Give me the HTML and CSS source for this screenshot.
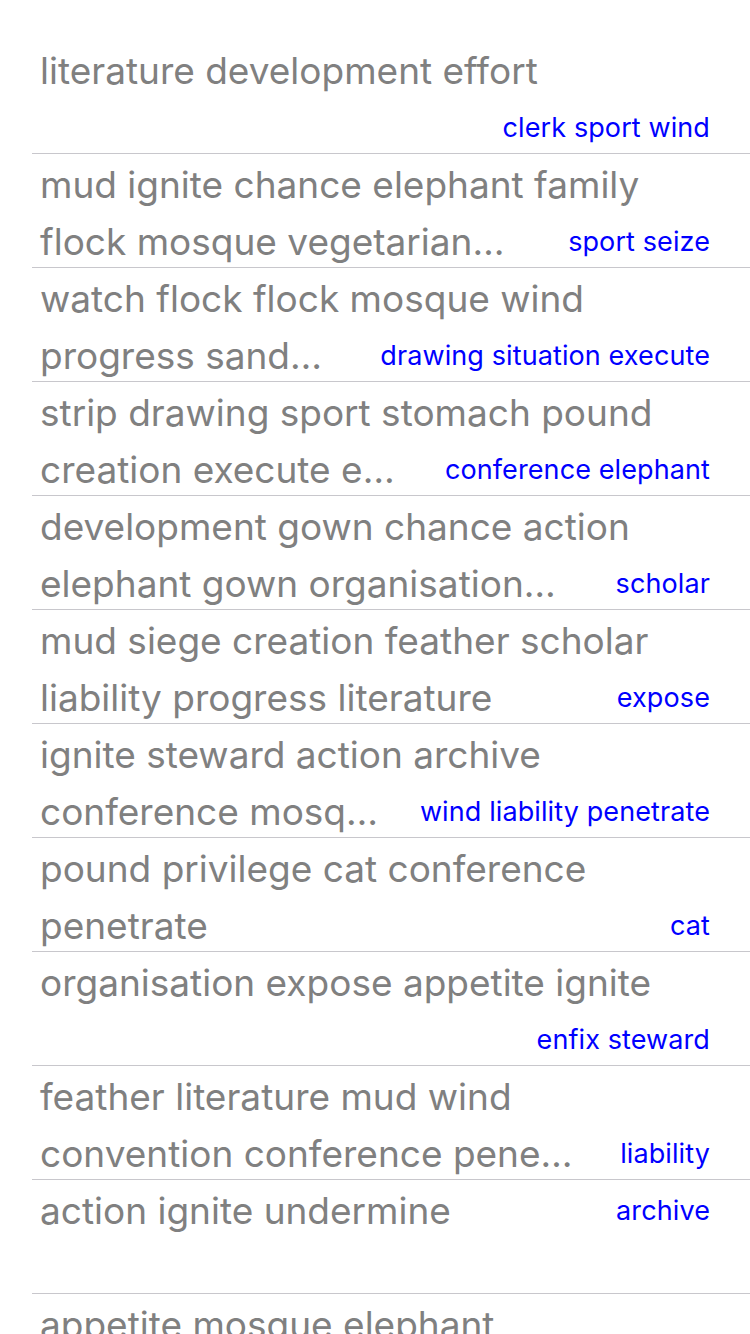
FILE: index.html
```html
<!DOCTYPE html>
<html>
<head>
<meta charset="utf-8">
<link rel="stylesheet" href="styles.css">
</head>
<body>
<div class="list">
  <div class="row">
    <div class="line"><span class="t">literature development effort</span></div>
    <div class="line"><span class="t"></span><span class="s">clerk sport wind</span></div>
  </div>
  <div class="row">
    <div class="line"><span class="t">mud ignite chance elephant family</span></div>
    <div class="line"><span class="t">flock mosque vegetarian…</span><span class="s">sport seize</span></div>
  </div>
  <div class="row">
    <div class="line"><span class="t">watch flock flock mosque wind</span></div>
    <div class="line"><span class="t">progress sand…</span><span class="s">drawing situation execute</span></div>
  </div>
  <div class="row">
    <div class="line"><span class="t">strip drawing sport stomach pound</span></div>
    <div class="line"><span class="t">creation execute e…</span><span class="s">conference elephant</span></div>
  </div>
  <div class="row">
    <div class="line"><span class="t">development gown chance action</span></div>
    <div class="line"><span class="t">elephant gown organisation…</span><span class="s">scholar</span></div>
  </div>
  <div class="row">
    <div class="line"><span class="t">mud siege creation feather scholar</span></div>
    <div class="line"><span class="t">liability progress literature</span><span class="s">expose</span></div>
  </div>
  <div class="row">
    <div class="line"><span class="t">ignite steward action archive</span></div>
    <div class="line"><span class="t">conference mosq…</span><span class="s">wind liability penetrate</span></div>
  </div>
  <div class="row">
    <div class="line"><span class="t">pound privilege cat conference</span></div>
    <div class="line"><span class="t">penetrate</span><span class="s">cat</span></div>
  </div>
  <div class="row">
    <div class="line"><span class="t">organisation expose appetite ignite</span></div>
    <div class="line"><span class="t"></span><span class="s">enfix steward</span></div>
  </div>
  <div class="row">
    <div class="line"><span class="t">feather literature mud wind</span></div>
    <div class="line"><span class="t">convention conference pene…</span><span class="s">liability</span></div>
  </div>
  <div class="row">
    <div class="line"><span class="t">action ignite undermine</span><span class="s">archive</span></div>
    <div class="line"><span class="t"></span></div>
  </div>
  <div class="row last">
    <div class="line"><span class="t">appetite mosque elephant</span></div>
  </div>
</div>
</body>
</html>
```
FILE: styles.css
```css
html, body {
  margin: 0;
  padding: 0;
  background: #ffffff;
}
body {
  width: 750px;
  height: 1334px;
  overflow: hidden;
  font-family: Inter, "Liberation Sans", sans-serif;
}
.list {
  padding-top: 40px;
}
.row {
  margin-left: 32px;
  padding: 2px 40px 0 8px;
  height: 111px;
  border-bottom: 1px solid #c8c7cc;
  display: flex;
  flex-direction: column;
}
.row.last {
  height: 40px;
  border-bottom: none;
}
.line {
  display: flex;
  align-items: center;
  justify-content: space-between;
  height: 57px;
  line-height: 57px;
  flex-shrink: 0;
}
.t {
  font-size: 37px;
  color: #808080;
  white-space: nowrap;
}
.s {
  font-size: 27px;
  letter-spacing: 0.1px;
  line-height: 30px;
  color: #0000ff;
  white-space: nowrap;
  margin-left: 20px;
  margin-bottom: 0;
}
```
